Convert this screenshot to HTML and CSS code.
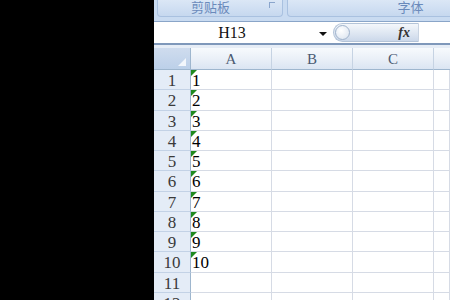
FILE: index.html
```html
<!DOCTYPE html>
<html lang="zh">
<head>
    <meta charset="UTF-8">
    <title>Book1 - Excel</title>
    <link rel="stylesheet" href="styles.css">
</head>
<body>
    <div class="app">
        <div class="ribbon">
            <div class="group group-clip">
                <span class="group-label">剪贴板</span>
                <span class="launcher"></span>
            </div>
            <div class="group group-font">
                <span class="group-label">字体</span>
            </div>
        </div>

        <div class="formula-bar">
            <div class="name-box">
                <span class="name-text">H13</span>
                <span class="name-arrow"></span>
            </div>
            <div class="fx-pill">
                <span class="fx-knob"></span>
                <span class="fx">fx</span>
            </div>
            <div class="formula-input"></div>
        </div>
        <div class="bar-gap"></div>

        <div class="sheet" id="sheet">
            <div class="corner"><span class="corner-tri"></span></div>
            <div class="col-head">A</div>
            <div class="col-head">B</div>
            <div class="col-head">C</div>
            <div class="col-head last"></div>
        </div>
    </div>

    <script>
        const sheet = document.getElementById('sheet');

        for (let r = 1; r <= 12; r++) {
            const head = document.createElement('div');
            head.className = 'row-head';
            head.textContent = r;
            sheet.appendChild(head);

            const a = document.createElement('div');
            a.className = 'cell';
            if (r <= 10) {
                a.classList.add('num');
                a.textContent = r;
            }
            sheet.appendChild(a);

            for (let c = 0; c < 3; c++) {
                const cell = document.createElement('div');
                cell.className = c === 2 ? 'cell last' : 'cell';
                sheet.appendChild(cell);
            }
        }
    </script>
</body>
</html>
```

FILE: styles.css
```css
html, body {
    margin: 0;
    padding: 0;
}
body {
    background-color: #000;
    width: 450px;
    height: 300px;
    overflow: hidden;
}
.app {
    margin-left: 154px;
    width: 296px;
    height: 300px;
    background-color: #ffffff;
    overflow: hidden;
}

/* ribbon group captions */
.ribbon {
    height: 21px;
    display: flex;
    gap: 4px;
    padding-left: 3px;
    background-color: #c9dbf1;
    border-bottom: 1px solid #8aa5c8;
}
.group {
    position: relative;
    height: 16px;
    border: 1px solid #a9c1e0;
    border-top: none;
    border-radius: 0 0 4px 4px;
    background: linear-gradient(#dbe7f6, #c6d8ef);
    display: flex;
    justify-content: center;
    overflow: hidden;
}
.group-clip { width: 124px; }
.group-font { flex: 1; margin-right: -4px; }
.group-label {
    font-family: "Noto Sans CJK SC", sans-serif;
    font-size: 13px;
    line-height: 14px;
    color: #6a8abb;
}
.group-clip .group-label { margin-left: -19px; }
.group-font .group-label { margin-left: 80px; }
.launcher {
    position: absolute;
    right: 7px;
    top: 2px;
    width: 5px;
    height: 5px;
    border-top: 1px solid #8aa5cc;
    border-left: 1px solid #8aa5cc;
}

/* formula bar */
.formula-bar {
    height: 21px;
    display: flex;
    align-items: center;
    background-color: #ffffff;
    border-bottom: 2px solid #7f98ba;
}
.name-box {
    width: 176px;
    height: 21px;
    display: flex;
    align-items: center;
    position: relative;
}
.name-text {
    width: 156px;
    text-align: center;
    font-family: "Liberation Serif", serif;
    font-size: 16px;
    color: #111;
    padding-top: 1px;
}
.name-arrow {
    position: absolute;
    left: 165px;
    top: 10px;
    width: 0;
    height: 0;
    border-left: 4px solid transparent;
    border-right: 4px solid transparent;
    border-top: 4px solid #111;
}
.fx-pill {
    position: relative;
    width: 86px;
    height: 19px;
    margin-left: 3px;
    border: 1px solid #b4c4d8;
    border-right-color: #c9d4e2;
    border-radius: 10px 0 0 10px;
    background: linear-gradient(#f4f7fb, #dce5f1 60%, #cbd8ea);
    display: flex;
    align-items: center;
    justify-content: flex-end;
    box-sizing: border-box;
}
.fx-knob {
    position: absolute;
    left: 1px;
    top: 1px;
    width: 15px;
    height: 15px;
    border-radius: 50%;
    border: 1px solid #9fb2cb;
    background: radial-gradient(circle at 40% 35%, #ffffff, #d7e1ee);
    box-sizing: border-box;
}
.fx {
    font-family: "Liberation Serif", serif;
    font-style: italic;
    font-weight: bold;
    font-size: 14px;
    color: #333;
    margin-right: 8px;
}
.formula-input {
    flex: 1;
    height: 21px;
    background-color: #fff;
}
.bar-gap {
    height: 3px;
    background-color: #e6edf6;
}

/* grid */
.sheet {
    display: grid;
    grid-template-columns: 37px 81px 81px 81px 16px;
    grid-template-rows: 22px repeat(12, 20.25px);
}
.corner {
    position: relative;
    background: linear-gradient(#cfdcee, #bcd0e9);
    border-right: 1px solid #9eb6ce;
    border-bottom: 1px solid #9eb6ce;
    box-sizing: border-box;
}
.corner-tri {
    position: absolute;
    right: 4px;
    bottom: 3px;
    width: 0;
    height: 0;
    border-left: 8px solid transparent;
    border-bottom: 8px solid #f3f7fc;
}
.col-head {
    background: linear-gradient(#f7fafd, #e9eff7 55%, #dbe5f2);
    border-right: 1px solid #c6d3e3;
    border-bottom: 1px solid #9eb6ce;
    box-sizing: border-box;
    font-family: "Liberation Serif", serif;
    font-size: 15px;
    color: #4a5a72;
    text-align: center;
    line-height: 22px;
}
.col-head.last { border-right: none; }
.row-head {
    background-color: #e4ecf7;
    border-right: 1px solid #9eb6ce;
    border-bottom: 1px solid #c3d2e6;
    box-sizing: border-box;
    font-family: "Liberation Serif", serif;
    font-size: 17px;
    color: #3a3a3a;
    text-align: center;
    line-height: 21px;
}
.cell {
    position: relative;
    background-color: #fff;
    border-right: 1px solid #d6dbe5;
    border-bottom: 1px solid #d6dbe5;
    box-sizing: border-box;
}
.cell.last { border-right: 1px solid #d6dbe5; }
.num {
    font-family: "Liberation Serif", serif;
    font-size: 17px;
    color: #000;
    line-height: 22px;
    padding-left: 1px;
}
.num::before {
    content: "";
    position: absolute;
    left: 0;
    top: 0;
    width: 0;
    height: 0;
    border-top: 6px solid #1f8a1f;
    border-right: 6px solid transparent;
}
```
